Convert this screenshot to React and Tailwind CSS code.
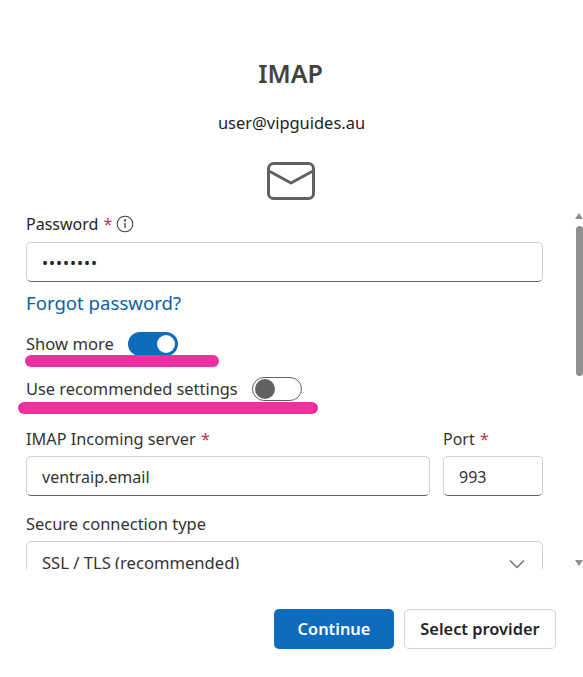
import React from 'react'

const font = { fontFamily: '"Noto Sans", sans-serif' }

function Star({ className }) {
    return <span className={"text-[#c4314b] " + className}>*</span>
}

function TextBox({ value, className }) {
    return (
        <div className={"h-[40px] flex items-center pl-[15px] pt-[2px] bg-white rounded-[5px] border border-[#d1d1d1] border-b-[#616161] text-[16px] text-[#333] " + className}>
            {value}
        </div>
    )
}

function Toggle({ on }) {
    if (on) {
        return (
            <div className="w-[50px] h-[24px] rounded-full bg-[#0f6cbd] flex items-center justify-end pr-[3px]">
                <div className="w-[18px] h-[18px] rounded-full bg-white"></div>
            </div>
        )
    }
    return (
        <div className="w-[50px] h-[24px] rounded-full bg-white border border-[#616161] flex items-center pl-[2px]">
            <div className="w-[20px] h-[20px] rounded-full bg-[#616161]"></div>
        </div>
    )
}

export default function App() {
    return (
        <div className="relative w-[583px] h-[677px] bg-white overflow-hidden flex flex-col text-[#333]" style={font}>
            {/* header */}
            <div className="flex flex-col items-center pt-[56px]">
                <div className="mr-[2px] h-[34px] leading-[34px] text-[25px] font-semibold text-[#424242]">IMAP</div>
                <div className="mt-[22px] h-[22px] leading-[22px] text-[16.45px] text-[#242424]">user@vipguides.au</div>
                <svg className="mt-[27px] mr-[2px]" width="50" height="40" viewBox="0 0 50 40" fill="none" stroke="#616161" strokeWidth="3">
                    <rect x="2.5" y="2.5" width="45" height="35" rx="5" />
                    <path d="M3 10 L25 22 L47 10" strokeLinejoin="round" />
                </svg>
            </div>

            {/* scroll area */}
            <div className="relative mt-[10px] h-[358px] overflow-hidden">
                <div className="pl-[26px] pr-[40px] pt-[2px]">
                    <div className="flex items-center h-[22px] text-[16px] text-[#242424]">
                        Password <Star className="ml-[5px]" />
                        <svg className="ml-[4px]" width="18" height="18" viewBox="0 0 18 18" fill="none" stroke="#424242" strokeWidth="1.1">
                            <circle cx="9" cy="9" r="7.8" />
                            <path d="M9 8 V13" strokeWidth="1.3" />
                            <circle cx="9" cy="5.5" r="0.6" fill="#424242" />
                        </svg>
                    </div>
                    <TextBox className="mt-[7px] w-[517px] tracking-[1px] text-[#242424]" value="••••••••" />
                    <div className="mt-[10px] h-[22px] leading-[22px] text-[18.6px] text-[#115ea3]">Forgot password?</div>

                    <div className="mt-[18px] flex items-center h-[24px]">
                        <span className="text-[16.6px]">Show more</span>
                        <div className="ml-[14px]"><Toggle on /></div>
                    </div>
                    <div className="mt-[21px] flex items-center h-[24px]">
                        <span className="text-[16.4px]">Use recommended settings</span>
                        <div className="ml-[14px]"><Toggle /></div>
                    </div>

                    <div className="mt-[27px] flex gap-[13px]">
                        <div className="w-[404px]">
                            <div className="h-[22px] leading-[22px] text-[16.3px]">IMAP Incoming server <Star className="ml-[1px]" /></div>
                            <TextBox className="mt-[6px]" value="ventraip.email" />
                        </div>
                        <div className="w-[100px]">
                            <div className="h-[22px] leading-[22px] text-[16px]">Port <Star className="ml-[1px]" /></div>
                            <TextBox className="mt-[6px]" value="993" />
                        </div>
                    </div>

                    <div className="mt-[17px] h-[22px] leading-[22px] text-[16.45px]">Secure connection type</div>
                    <div className="mt-[6px] w-[517px] h-[40px] flex items-center justify-between pl-[15px] pr-[16px] pt-[5px] rounded-[5px] border border-[#d1d1d1] text-[16.6px]">
                        SSL / TLS (recommended)
                        <svg width="18" height="10" viewBox="0 0 18 10" fill="none" stroke="#616161" strokeWidth="1.2">
                            <path d="M2 1.5 L9 8.5 L16 1.5" />
                        </svg>
                    </div>
                </div>

                {/* scrollbar */}
                <div className="absolute right-0 top-0 bottom-0 w-[8px]">
                    <svg className="absolute left-0 top-[2px]" width="8" height="6" viewBox="0 0 8 6" fill="#8f8f8f"><path d="M4 0 L8 6 H0 Z" /></svg>
                    <div className="absolute left-[1px] top-[15px] w-[7px] h-[150px] rounded-full bg-[#8f8f8f]"></div>
                    <svg className="absolute left-0 top-[349px]" width="8" height="6" viewBox="0 0 8 6" fill="#8f8f8f"><path d="M0 0 H8 L4 6 Z" /></svg>
                </div>
            </div>

            {/* footer */}
            <div className="mt-[40px] flex justify-end gap-[10px] pr-[27px]">
                <button className="w-[120px] h-[40px] rounded-[5px] bg-[#0f6cbd] text-white text-[16.4px] font-semibold">Continue</button>
                <button className="w-[152px] h-[40px] rounded-[5px] bg-white border border-[#d1d1d1] text-[#242424] text-[16.4px] font-semibold">Select provider</button>
            </div>

            {/* highlighter marks */}
            <div className="absolute left-[25px] top-[355px] w-[194px] h-[12px] rounded-full bg-[#ee2f9f]"></div>
            <div className="absolute left-[18px] top-[402px] w-[300px] h-[12px] rounded-full bg-[#ee2f9f]"></div>
        </div>
    )
}
